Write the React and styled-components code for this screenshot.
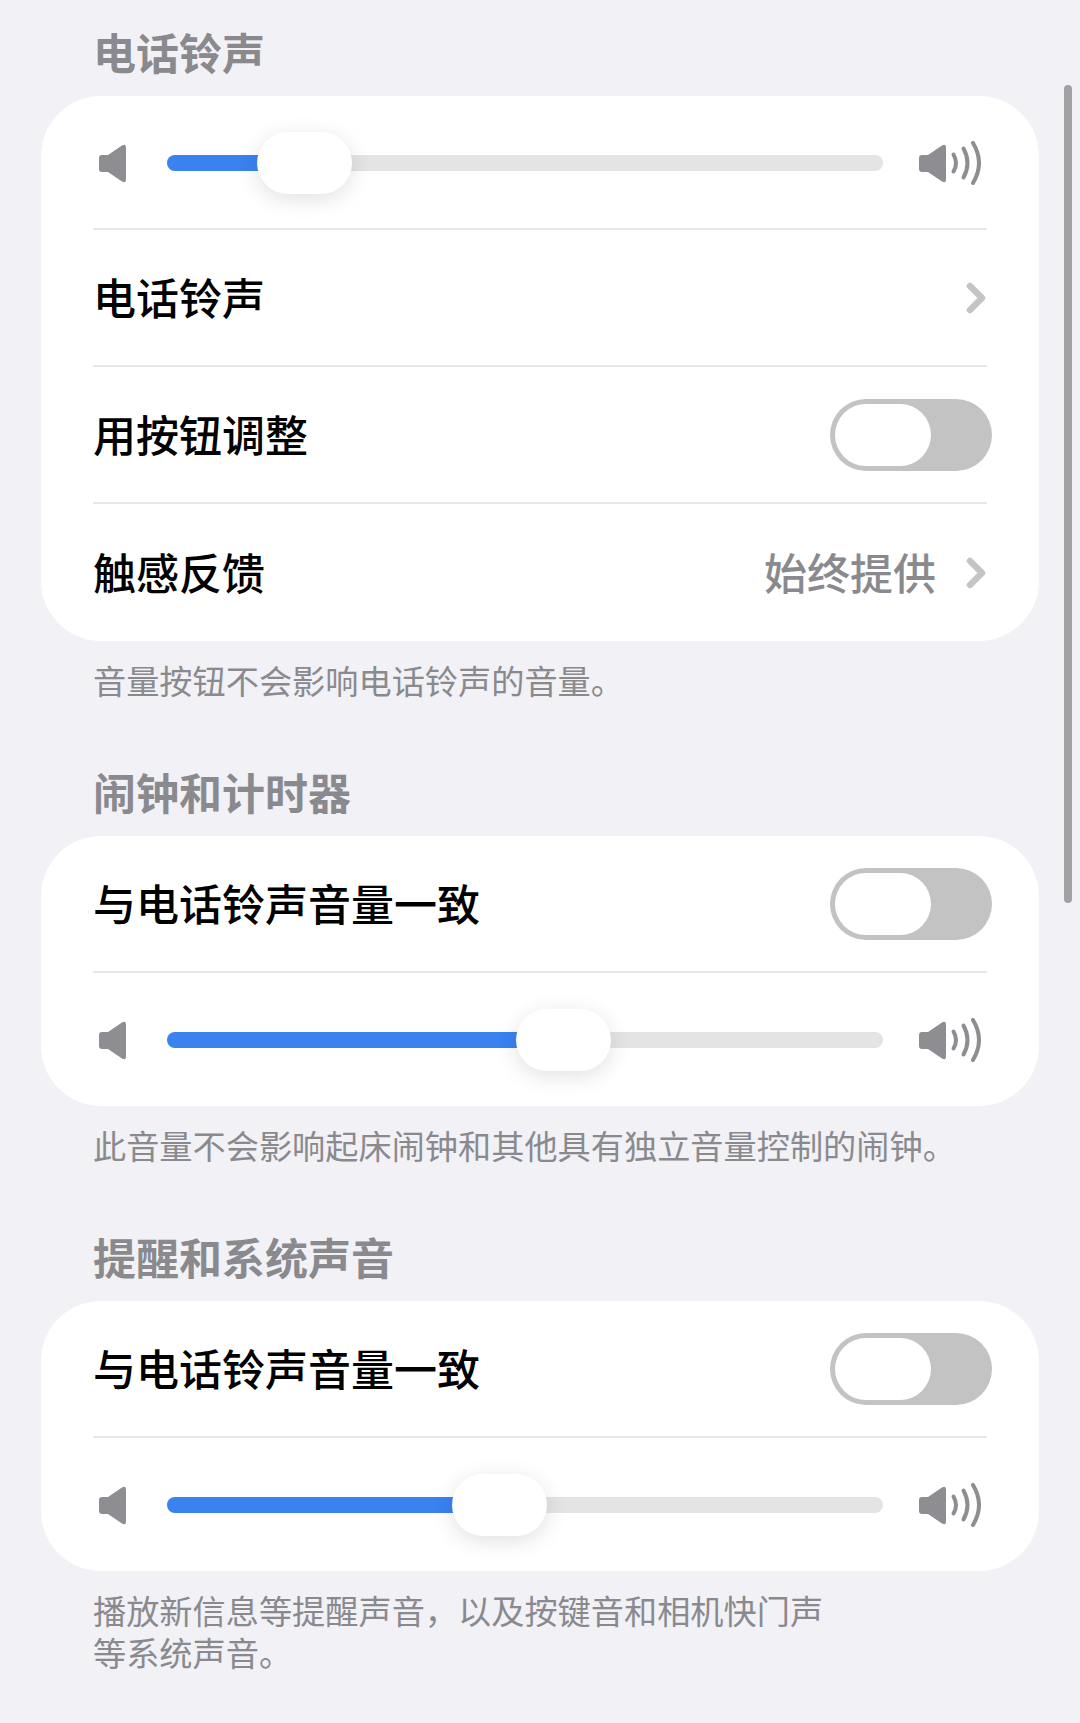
import React from "react";
import styled, { createGlobalStyle } from "styled-components";

const TRACK_WIDTH = 716;
const THUMB_WIDTH = 95;

function SpeakerBody() {
  return (
    <path d="M3 14 H9 L23 4.5 Q27 2 27 7 V38 Q27 43 23 40.5 L9 31 H3 Q0 31 0 28 V17 Q0 14 3 14 Z" />
  );
}

function SmallSpeaker() {
  return (
    <SmallIcon width="27" height="39" viewBox="0 3 27 39">
      <SpeakerBody />
    </SmallIcon>
  );
}

function LargeSpeaker() {
  return (
    <LargeIcon width="62" height="44" viewBox="0 0 62 44">
      <SpeakerBody />
      <WavePath d="M34.5 13.5 Q39.5 22 34.5 30.5" />
      <WavePath d="M44.5 7.5 Q52.5 22 44.5 36.5" />
      <WavePath d="M54 2 Q66 22 54 42" />
    </LargeIcon>
  );
}

function VolumeSlider({ thumbLeft }) {
  return (
    <SliderRow>
      <SmallSpeaker />
      <Track>
        <Fill style={{ width: thumbLeft + 10 }} />
        <Thumb style={{ left: thumbLeft }} />
      </Track>
      <LargeSpeaker />
    </SliderRow>
  );
}

function Chevron() {
  return (
    <ChevronIcon width="20" height="32" viewBox="0 0 20 32">
      <path d="M4 4 L16 16 L4 28" />
    </ChevronIcon>
  );
}

function Toggle() {
  return (
    <ToggleTrack>
      <ToggleThumb />
    </ToggleTrack>
  );
}

function App() {
  return (
    <Page>
      <GlobalStyle />
      <Section>
        <SectionTitle>电话铃声</SectionTitle>
        <Card>
          <VolumeSlider thumbLeft={90} />
          <Divider />
          <Row>
            <RowLabel>电话铃声</RowLabel>
            <Chevron />
          </Row>
          <Divider />
          <Row>
            <RowLabel>用按钮调整</RowLabel>
            <Toggle />
          </Row>
          <Divider />
          <Row $tall>
            <RowLabel>触感反馈</RowLabel>
            <RowValue>
              始终提供
              <Chevron />
            </RowValue>
          </Row>
        </Card>
        <Footnote>音量按钮不会影响电话铃声的音量。</Footnote>
      </Section>
      <Section>
        <SectionTitle>闹钟和计时器</SectionTitle>
        <Card>
          <Row>
            <RowLabel>与电话铃声音量一致</RowLabel>
            <Toggle />
          </Row>
          <Divider />
          <VolumeSlider thumbLeft={349} />
        </Card>
        <Footnote>此音量不会影响起床闹钟和其他具有独立音量控制的闹钟。</Footnote>
      </Section>
      <Section>
        <SectionTitle>提醒和系统声音</SectionTitle>
        <Card>
          <Row>
            <RowLabel>与电话铃声音量一致</RowLabel>
            <Toggle />
          </Row>
          <Divider />
          <VolumeSlider thumbLeft={285} />
        </Card>
        <Footnote>
          播放新信息等提醒声音，以及按键音和相机快门声
          <br />
          等系统声音。
        </Footnote>
      </Section>
      <ScrollBar />
    </Page>
  );
}

export default App;

const GlobalStyle = createGlobalStyle`
  html, body {
    margin: 0;
    padding: 0;
    background-color: #f1f1f6;
  }
`;

const Page = styled.div`
  position: relative;
  display: flex;
  flex-direction: column;
  gap: 61px;
  box-sizing: border-box;
  width: 1080px;
  height: 1723px;
  padding: 22px 41px 0 41px;
  overflow: hidden;
  background-color: #f1f1f6;
  font-family: "Noto Sans CJK SC", "Liberation Sans", sans-serif;
`;

const Section = styled.section`
  display: flex;
  flex-direction: column;
`;

const SectionTitle = styled.h2`
  margin: 0 0 16px 52px;
  font-size: 43px;
  line-height: 58px;
  font-weight: 700;
  color: #8a8a8e;
`;

const Card = styled.div`
  display: flex;
  flex-direction: column;
  padding-bottom: 1px;
  border-radius: 60px;
  background-color: #ffffff;
`;

const Row = styled.div`
  display: flex;
  justify-content: space-between;
  align-items: center;
  height: ${(props) => (props.$tall ? 136 : 135)}px;
  padding: 0 47px 0 52px;
`;

const RowLabel = styled.span`
  margin-bottom: 3px;
  font-size: 43px;
  line-height: 58px;
  font-weight: 500;
  color: #000000;
`;

const RowValue = styled.span`
  display: flex;
  align-items: center;
  gap: 30px;
  margin-bottom: 3px;
  font-size: 43px;
  line-height: 58px;
  font-weight: 500;
  color: #8a8a8e;

  svg {
    margin-top: 5px;
  }
`;

const ChevronIcon = styled.svg`
  flex: none;
  margin-right: 6px;

  path {
    fill: none;
    stroke: #c4c4c6;
    stroke-width: 6.5;
    stroke-linecap: round;
    stroke-linejoin: round;
  }
`;

const Divider = styled.div`
  height: 2px;
  margin: 0 52px;
  background-color: #e8e8ea;
`;

const SliderRow = styled.div`
  display: flex;
  align-items: center;
  box-sizing: border-box;
  height: 132px;
  padding: 2px 0 0 58px;
`;

const SmallIcon = styled.svg`
  flex: none;
  margin-right: 41px;
  fill: #8e8e92;
`;

const LargeIcon = styled.svg`
  flex: none;
  margin-left: 36px;
  fill: #8e8e92;
`;

const WavePath = styled.path`
  fill: none;
  stroke: #8e8e92;
  stroke-width: 4;
  stroke-linecap: round;
`;

const Track = styled.div`
  position: relative;
  flex: none;
  width: ${TRACK_WIDTH}px;
  height: 16px;
  border-radius: 8px;
  background-color: #e4e4e5;
`;

const Fill = styled.div`
  height: 100%;
  border-radius: 8px 0 0 8px;
  background-color: #3a82f0;
`;

const Thumb = styled.div`
  position: absolute;
  top: -23px;
  width: ${THUMB_WIDTH}px;
  height: 62px;
  border-radius: 31px;
  background-color: #ffffff;
  box-shadow: 0 5px 22px rgba(0, 0, 0, 0.12);
`;

const ToggleTrack = styled.div`
  flex: none;
  box-sizing: border-box;
  display: flex;
  align-items: center;
  width: 162px;
  height: 72px;
  padding-left: 5px;
  border-radius: 36px;
  background-color: #c3c3c4;
`;

const ToggleThumb = styled.div`
  width: 96px;
  height: 62px;
  border-radius: 31px;
  background-color: #ffffff;
`;

const Footnote = styled.p`
  margin: 18px 0 0 52px;
  font-size: 33.2px;
  line-height: 42px;
  color: #8a8a8e;
`;

const ScrollBar = styled.div`
  position: absolute;
  top: 85px;
  left: 1064px;
  width: 8px;
  height: 818px;
  border-radius: 4px;
  background-color: #a2a2a5;
`;
